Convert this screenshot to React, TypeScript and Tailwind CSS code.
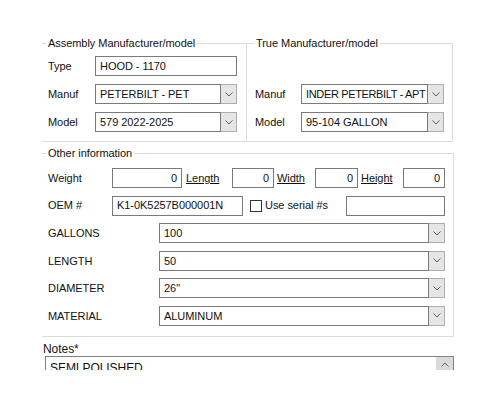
function Chevron() {
  return (
    <svg width="8" height="5" viewBox="0 0 8 5" fill="none">
      <path d="M0.5 0.5 L4 4 L7.5 0.5" stroke="#606060" strokeWidth="1" />
    </svg>
  );
}

function TextBox({ value, className = "", right = false }: { value: string; className?: string; right?: boolean }) {
  return (
    <div
      className={`flex h-[20px] items-center border border-[#7a7a7a] bg-white ${right ? "justify-end pr-[4px]" : "pl-[4px]"} ${className}`}
    >
      {value}
    </div>
  );
}

function Combo({ value, className = "", tight = false }: { value: string; className?: string; tight?: boolean }) {
  return (
    <div className={`flex h-[20px] ${className}`}>
      <div
        className={`flex flex-1 items-center overflow-hidden whitespace-nowrap border border-[#7a7a7a] bg-white pl-[4px] ${tight ? "tracking-[-0.35px]" : ""}`}
      >
        {value}
      </div>
      <div className="flex w-[16px] items-center justify-center border border-l-0 border-[#adadad] bg-[#e5e5e5]">
        <Chevron />
      </div>
    </div>
  );
}

function Row({ label, labelW, children }: { label: string; labelW: string; children: React.ReactNode }) {
  return (
    <div className="flex h-[20px] items-center">
      <span className={labelW}>{label}</span>
      {children}
    </div>
  );
}

const specs = [
  { label: "GALLONS", value: "100" },
  { label: "LENGTH", value: "50" },
  { label: "DIAMETER", value: "26\"" },
  { label: "MATERIAL", value: "ALUMINUM" },
];

export default function App() {
  return (
    <div className="h-[400px] w-[500px] bg-white font-['Liberation_Sans',Arial,sans-serif] text-[11px] tracking-[-0.05px] text-[#111111]">
      <div className="h-[370px] overflow-hidden pl-[42px] pt-[37px]">
        <div className="flex w-[411px]">
          <fieldset className="w-[205px] border-y border-r border-[#dcdcdc] pb-[9px] pl-[6px]">
            <legend className="ml-[-2px] px-[2px] leading-[13px]">Assembly Manufacturer/model</legend>
            <div className="mt-[6px] flex flex-col gap-[8px]">
              <Row label="Type" labelW="w-[47px]">
                <TextBox value="HOOD - 1170" className="w-[142px]" />
              </Row>
              <Row label="Manuf" labelW="w-[47px]">
                <Combo value="PETERBILT - PET" className="w-[142px]" />
              </Row>
              <Row label="Model" labelW="w-[47px]">
                <Combo value="579 2022-2025" className="w-[142px]" />
              </Row>
            </div>
          </fieldset>
          <fieldset className="w-[206px] border-y border-r border-[#dcdcdc] pb-[9px] pl-[8px]">
            <legend className="ml-[-1px] px-[2px] leading-[13px]">True Manufacturer/model</legend>
            <div className="mt-[6px] flex flex-col gap-[8px]">
              <div className="h-[20px]" />
              <Row label="Manuf" labelW="w-[46px]">
                <Combo value="INDER PETERBILT - APT" tight className="w-[143px]" />
              </Row>
              <Row label="Model" labelW="w-[46px]">
                <Combo value="95-104 GALLON" className="w-[143px]" />
              </Row>
            </div>
          </fieldset>
        </div>

        <fieldset className="mt-[5px] w-[411px] border-y border-r border-[#dcdcdc] pb-[10px] pl-[6px] pr-[8px]">
          <legend className="ml-[-2px] px-[2px] leading-[13px]">Other information</legend>
          <div className="mt-[8px] flex flex-col gap-[7.6px]">
            <div className="flex h-[20px] items-center">
              <span className="w-[64px]">Weight</span>
              <TextBox value="0" right className="w-[70px]" />
              <span className="w-[50px] pl-[4px] underline">Length</span>
              <TextBox value="0" right className="w-[42px]" />
              <span className="w-[41px] pl-[3px] underline">Width</span>
              <TextBox value="0" right className="w-[43px]" />
              <span className="w-[45px] pl-[3px] underline">Height</span>
              <TextBox value="0" right className="w-[42px]" />
            </div>
            <div className="flex h-[20px] items-center">
              <span className="w-[64px]">OEM #</span>
              <TextBox value="K1-0K5257B000001N" className="w-[131px]" />
              <span className="ml-[7px] h-[12px] w-[12px] border border-[#333333] bg-white" />
              <span className="ml-[3px]">Use serial #s</span>
              <TextBox value="" className="ml-auto w-[99px]" />
            </div>
            {specs.map((s) => (
              <Row key={s.label} label={s.label} labelW="w-[111px]">
                <Combo value={s.value} className="w-[286px]" />
              </Row>
            ))}
          </div>
        </fieldset>

        <div className="ml-[1px] mt-[6px] text-[12px] leading-[13px]">Notes*</div>
        <div className="ml-[3px] flex h-[30px] w-[409px] border border-[#828282] bg-white text-[12px]">
          <div className="flex-1 pl-[4px] pt-[2px]">SEMI POLISHED</div>
          <div className="w-[17px] bg-[#f0f0f0]">
            <div className="flex h-[16px] items-center justify-center bg-[#dadada]">
              <svg width="8" height="5" viewBox="0 0 8 5" fill="none">
                <path d="M0.5 4.5 L4 1 L7.5 4.5" stroke="#606060" strokeWidth="1" />
              </svg>
            </div>
          </div>
        </div>
      </div>
    </div>
  );
}
